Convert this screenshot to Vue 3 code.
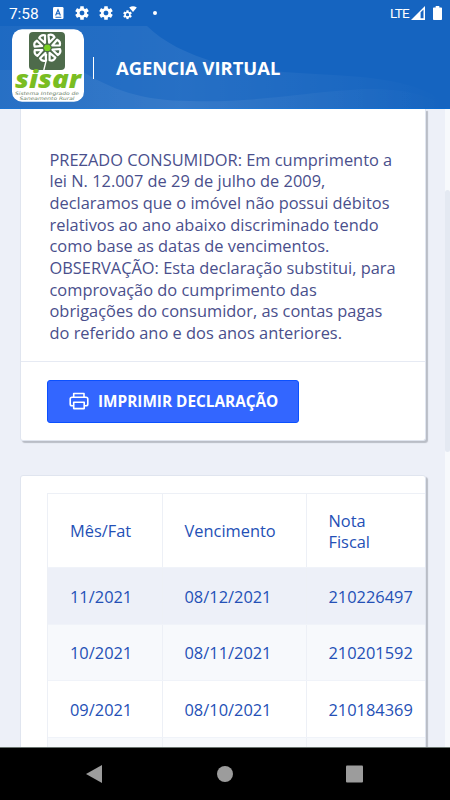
<script setup>
const lines = [
  'PREZADO CONSUMIDOR: Em cumprimento a',
  'lei N. 12.007 de 29 de julho de 2009,',
  'declaramos que o imóvel não possui débitos',
  'relativos ao ano abaixo discriminado tendo',
  'como base as datas de vencimentos.',
  'OBSERVAÇÃO: Esta declaração substitui, para',
  'comprovação do cumprimento das',
  'obrigações do consumidor, as contas pagas',
  'do referido ano e dos anos anteriores.',
]
const rows = [
  ['11/2021', '08/12/2021', '210226497'],
  ['10/2021', '08/11/2021', '210201592'],
  ['09/2021', '08/10/2021', '210184369'],
]
const petals = [0, 45, 90, 135, 180, 225, 270, 315]
const teeth = [0, 60, 120, 180, 240, 300]
</script>

<template>
  <div class="screen">
    <header class="top">
      <svg class="waves" width="450" height="109" viewBox="0 0 450 109" aria-hidden="true">
        <defs>
          <linearGradient id="wave" x1="0" x2="1">
            <stop offset="0" stop-color="#fff" stop-opacity=".04" />
            <stop offset=".4" stop-color="#fff" stop-opacity=".075" />
            <stop offset="1" stop-color="#fff" stop-opacity="0" />
          </linearGradient>
        </defs>
        <path d="M0 26H147C163 42 187 54 218 63C250 71 286 72 348 76C405 80 438 91 447 109H0Z" fill="url(#wave)" />
        <path d="M80 70C110 89 142 101 190 101C258 103 304 92 365 89C405 88 437 97 446 109H0V70Z" fill="url(#wave)" />
      </svg>
      <div class="status">
        <span class="time">7:58</span>
        <svg class="ic-a" width="11" height="12" viewBox="0 0 11 12"><rect width="10.5" height="12" rx="1.2" fill="#fff" /><path d="M2.6 8.5L5 2.7l2.4 5.8M3.4 6.8h3.2M2.5 10.2h5.8" fill="none" stroke="#1765c0" stroke-width="1.1" /></svg>
        <svg v-for="n in 2" :key="n" class="gear" width="14" height="14" viewBox="-7 -7 14 14">
          <g fill="#fff"><rect v-for="t in teeth" :key="t" x="-1.8" y="-6.8" width="3.6" height="4" rx=".5" :transform="`rotate(${t})`" /></g>
          <circle r="3.7" fill="none" stroke="#fff" stroke-width="2.6" />
        </svg>
        <svg class="gear-wifi" width="14" height="14" viewBox="0 0 14 14">
          <g transform="translate(4.5 8.7)"><g fill="#fff"><rect v-for="t in teeth" :key="t" x="-1.1" y="-4.4" width="2.2" height="2.5" :transform="`rotate(${t})`" /></g><circle r="2.4" fill="none" stroke="#fff" stroke-width="1.5" /></g>
          <path d="M6.2 1.4Q10 -.9 13.8 1.4L10 6Z" fill="#fff" />
        </svg>
        <i class="dot"></i>
        <span class="lte">LTE</span>
        <svg class="signal" width="14" height="14" viewBox="0 0 14 14"><path d="M0 14L14 0V14Z" fill="#fff" /><path d="M9.6 6.2L12.5 3.5V12.2H9.6Z" fill="#1765c0" /></svg>
        <svg class="battery" width="9" height="14" viewBox="0 0 9 14"><path d="M2.7 0h3.6v1.4H8.2q.8 0 .8.8V13.2q0 .8-.8.8H.8Q0 14 0 13.2V2.2Q0 1.4.8 1.4H2.7Z" fill="#fff" /></svg>
      </div>
      <div class="brand">
        <svg class="logo" width="72" height="73" viewBox="0 0 72 73">
          <rect y=".3" width="72" height="72.5" rx="10" fill="#fff" />
          <rect x="17" y="3" width="36" height="38" rx="4" fill="#4e6b4b" />
          <path d="M34.5 25Q34.5 33 31.8 41" fill="none" stroke="#fff" stroke-width="1.4" />
          <g transform="translate(35.3 18.8)">
            <path v-for="p in petals" :key="p" d="M0 -5.5L-3.2 -12.3Q0 -15 3.2 -12.3Z" fill="#4e6b4b" stroke="#fff" stroke-width="2.2" stroke-linejoin="round" :transform="`rotate(${p + 20})`" />
            <path d="M-3.7 0L-1.9 -3.1H1.9L3.7 0 1.9 3.1H-1.9Z" fill="#79d022" />
          </g>
          <text class="logo-name" x="3" y="59" textLength="66" lengthAdjust="spacingAndGlyphs">sisar</text>
          <text class="logo-sub" x="3" y="65.5" textLength="64" lengthAdjust="spacingAndGlyphs">Sistema Integrado de</text>
          <text class="logo-sub" x="7.5" y="70.8" textLength="55" lengthAdjust="spacingAndGlyphs">Saneamento Rural</text>
        </svg>
        <i class="sep"></i>
        <h1>AGENCIA VIRTUAL</h1>
      </div>
    </header>

    <main>
      <div class="page">
        <section class="card notice">
          <p><span v-for="l in lines" :key="l">{{ l }}</span></p>
          <footer>
            <button>
              <svg width="20" height="18" viewBox="0 0 20 18" fill="none" stroke="#fff" stroke-width="1.6" stroke-linejoin="round"><path d="M4.7 5V1.5H15V5M4.5 13.8H3Q1.2 13.8 1.2 12V7Q1.2 5.2 3 5.2H17Q18.8 5.2 18.8 7V12Q18.8 13.8 17 13.8H15.5M4.7 10.2H15.2V16.6H4.7Z" /></svg>
              <b>IMPRIMIR DECLARAÇÃO</b>
            </button>
          </footer>
        </section>
        <section class="card list">
          <div class="table">
            <div class="row head"><span>Mês/Fat</span><span>Vencimento</span><span>Nota<br />Fiscal</span></div>
            <div v-for="(r, i) in rows" :key="r[0]" class="row" :class="{ selected: i === 0, even: i === 1 }">
              <span v-for="c in r" :key="c">{{ c }}</span>
            </div>
            <div class="row even"><span></span><span></span><span></span></div>
          </div>
        </section>
      </div>
      <div class="scroll"><i></i></div>
    </main>

    <nav>
      <svg width="450" height="53" viewBox="0 0 450 53" fill="#9c9c9c"><path d="M86 26L102 17V35Z" /><circle cx="225" cy="26" r="8" /><rect x="346" y="17.5" width="17" height="17" rx="1" /></svg>
    </nav>
  </div>
</template>

<style>
body { margin: 0; overflow: hidden; }
</style>
<style scoped>
* { box-sizing: border-box; }
.screen { width: 450px; height: 800px; display: flex; flex-direction: column; overflow: hidden; font-family: "Open Sans", sans-serif; background: #edf0f8; }
svg { display: block; flex: none; }
.top { position: relative; height: 109px; flex: none; background: #1564c0; color: #fff; border-bottom: 1px solid #0869cf; }
.waves { position: absolute; left: 0; top: 0; }
.status { position: relative; height: 26px; display: flex; align-items: center; padding: 0 8px 0 9px; font-family: Roboto, sans-serif; }
.time { font-size: 15.5px; width: 44px; letter-spacing: -.1px; padding-top: 2px; }
.gear { margin-left: 12px; }
.ic-a + .gear { margin-left: 11px; }
.gear + .gear { margin-left: 10px; }
.gear-wifi { margin-left: 10px; }
.dot { width: 4px; height: 4px; border-radius: 50%; background: #fff; margin-left: 16px; }
.lte { margin-left: auto; font-size: 13.5px; letter-spacing: -.7px; width: 20px; }
.signal { margin-left: 1px; }
.battery { margin-left: 8px; }
.brand { position: relative; display: flex; align-items: center; padding: 3px 12px 0; }
.logo-name { font: italic 800 25px "Open Sans", sans-serif; fill: #79bd22; }
.logo-sub { font: italic 4.6px "DejaVu Sans", sans-serif; fill: #6c8269; }
.sep { width: 1px; height: 22px; margin: 4px 22px 0 9px; background: #fff; }
h1 { margin: 5px 0 0; font-size: 18.4px; line-height: 24px; font-weight: 700; white-space: nowrap; }
main { flex: 1; min-height: 0; display: flex; overflow: hidden; }
.page { width: 440px; flex: none; padding-left: 20px; }
.card { width: 406px; background: #fff; border: 1px solid #e0e5ef; box-shadow: 2px 2px 1px #b9bdc6; }
.notice { height: 332px; border-top: 0; border-radius: 0 0 3px 3px; }
.notice p { margin: 0; height: 252px; padding: 39.6px 0 0 28.5px; color: #4a4f8c; font-size: 16.4px; line-height: 21.66px; white-space: nowrap; }
.notice p span { display: block; }
.notice footer { border-top: 1px solid #e6eaf3; padding: 18px 0 0 26px; }
button { width: 252px; height: 43px; display: flex; align-items: center; gap: 9px; padding: 0 0 2px 21px; border: 1px solid #0b50ff; border-radius: 3px; background: #3366ff; color: #fff; font-family: inherit; font-size: 15.35px; white-space: nowrap; }
.list { margin-top: 33.5px; height: 300px; padding: 17px 0 0 26px; border-radius: 3px 3px 0 0; }
.table { overflow: hidden; border-left: 1px solid #edf0f6; border-top: 1px solid #edf0f6; }
.row { display: grid; grid-template-columns: 114.5px 144px 119px; height: 56.7px; align-items: stretch; font-size: 16.4px; line-height: 21.66px; color: #2450b6; border-bottom: 1px solid #f0f3f9; }
.row span { display: flex; align-items: center; padding: 1px 0 0 22px; border-right: 1px solid #edf0f6; }
.row span:last-child { border-right: 0; }
.head { height: 74.5px; }
.head span { padding-top: 2px; }
.selected { background: #edf0f8; }
.even { background: #f7f9fc; }
.scroll { width: 5px; margin-left: auto; background: #f7f9fc; padding-top: 81px; }
.scroll i { display: block; height: 262px; background: #e4e9f2; border-radius: 3px; }
nav { height: 53px; flex: none; background: #000; border-top: 1px solid #69736e; }
</style>
